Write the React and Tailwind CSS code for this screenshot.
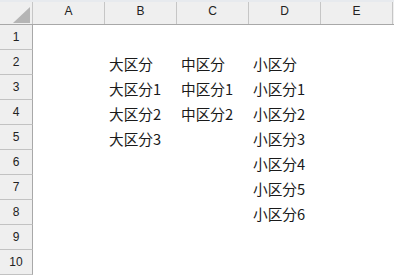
const columns = ['A', 'B', 'C', 'D', 'E'];

// cell values keyed by row number, one entry per column A..E
const data = {
  2: ['', '大区分', '中区分', '小区分', ''],
  3: ['', '大区分1', '中区分1', '小区分1', ''],
  4: ['', '大区分2', '中区分2', '小区分2', ''],
  5: ['', '大区分3', '', '小区分3', ''],
  6: ['', '', '', '小区分4', ''],
  7: ['', '', '', '小区分5', ''],
  8: ['', '', '', '小区分6', ''],
};

const rows = [1, 2, 3, 4, 5, 6, 7, 8, 9, 10];

function App() {
  return (
    <div className="w-[394px] h-[276px] overflow-hidden bg-white font-['Noto_Sans_CJK_JP',sans-serif]">
      {/* thin strip above the headers */}
      <div className="h-[2px] bg-[#e7eaee]" />

      {/* column headers */}
      <div className="flex h-[23px] bg-[#efefef] border-b border-[#a8a8a8]">
        <div className="w-[33px] shrink-0 border-r border-[#c6c6c6] flex items-end justify-end pr-[2px] pb-[1px]">
          <svg width="17" height="16" viewBox="0 0 17 16">
            <polygon points="17,0 17,16 0,16" fill="#b5b5b5" />
          </svg>
        </div>
        {columns.map((col) => (
          <div
            key={col}
            className="w-[72px] shrink-0 border-r border-[#c6c6c6] flex items-center justify-center pb-[4px] text-[12px] text-[#222] font-['Liberation_Sans',sans-serif]"
          >
            {col}
          </div>
        ))}
      </div>

      {/* grid body */}
      {rows.map((r) => (
        <div key={r} className="flex h-[25px]">
          <div className="w-[33px] shrink-0 bg-[#efefef] border-r border-b border-r-[#a8a8a8] border-b-[#c2c2c2] flex items-center justify-center pb-[1px] text-[12px] text-[#222] font-['Liberation_Sans',sans-serif]">
            {r}
          </div>
          {columns.map((col, i) => (
            <div
              key={col}
              className="w-[72px] shrink-0 flex items-center pl-[4px] pt-[4px] text-[14.67px] leading-none text-[#1a1a1a] whitespace-nowrap"
            >
              {data[r] ? data[r][i] : ''}
            </div>
          ))}
        </div>
      ))}
    </div>
  );
}

export default App;
